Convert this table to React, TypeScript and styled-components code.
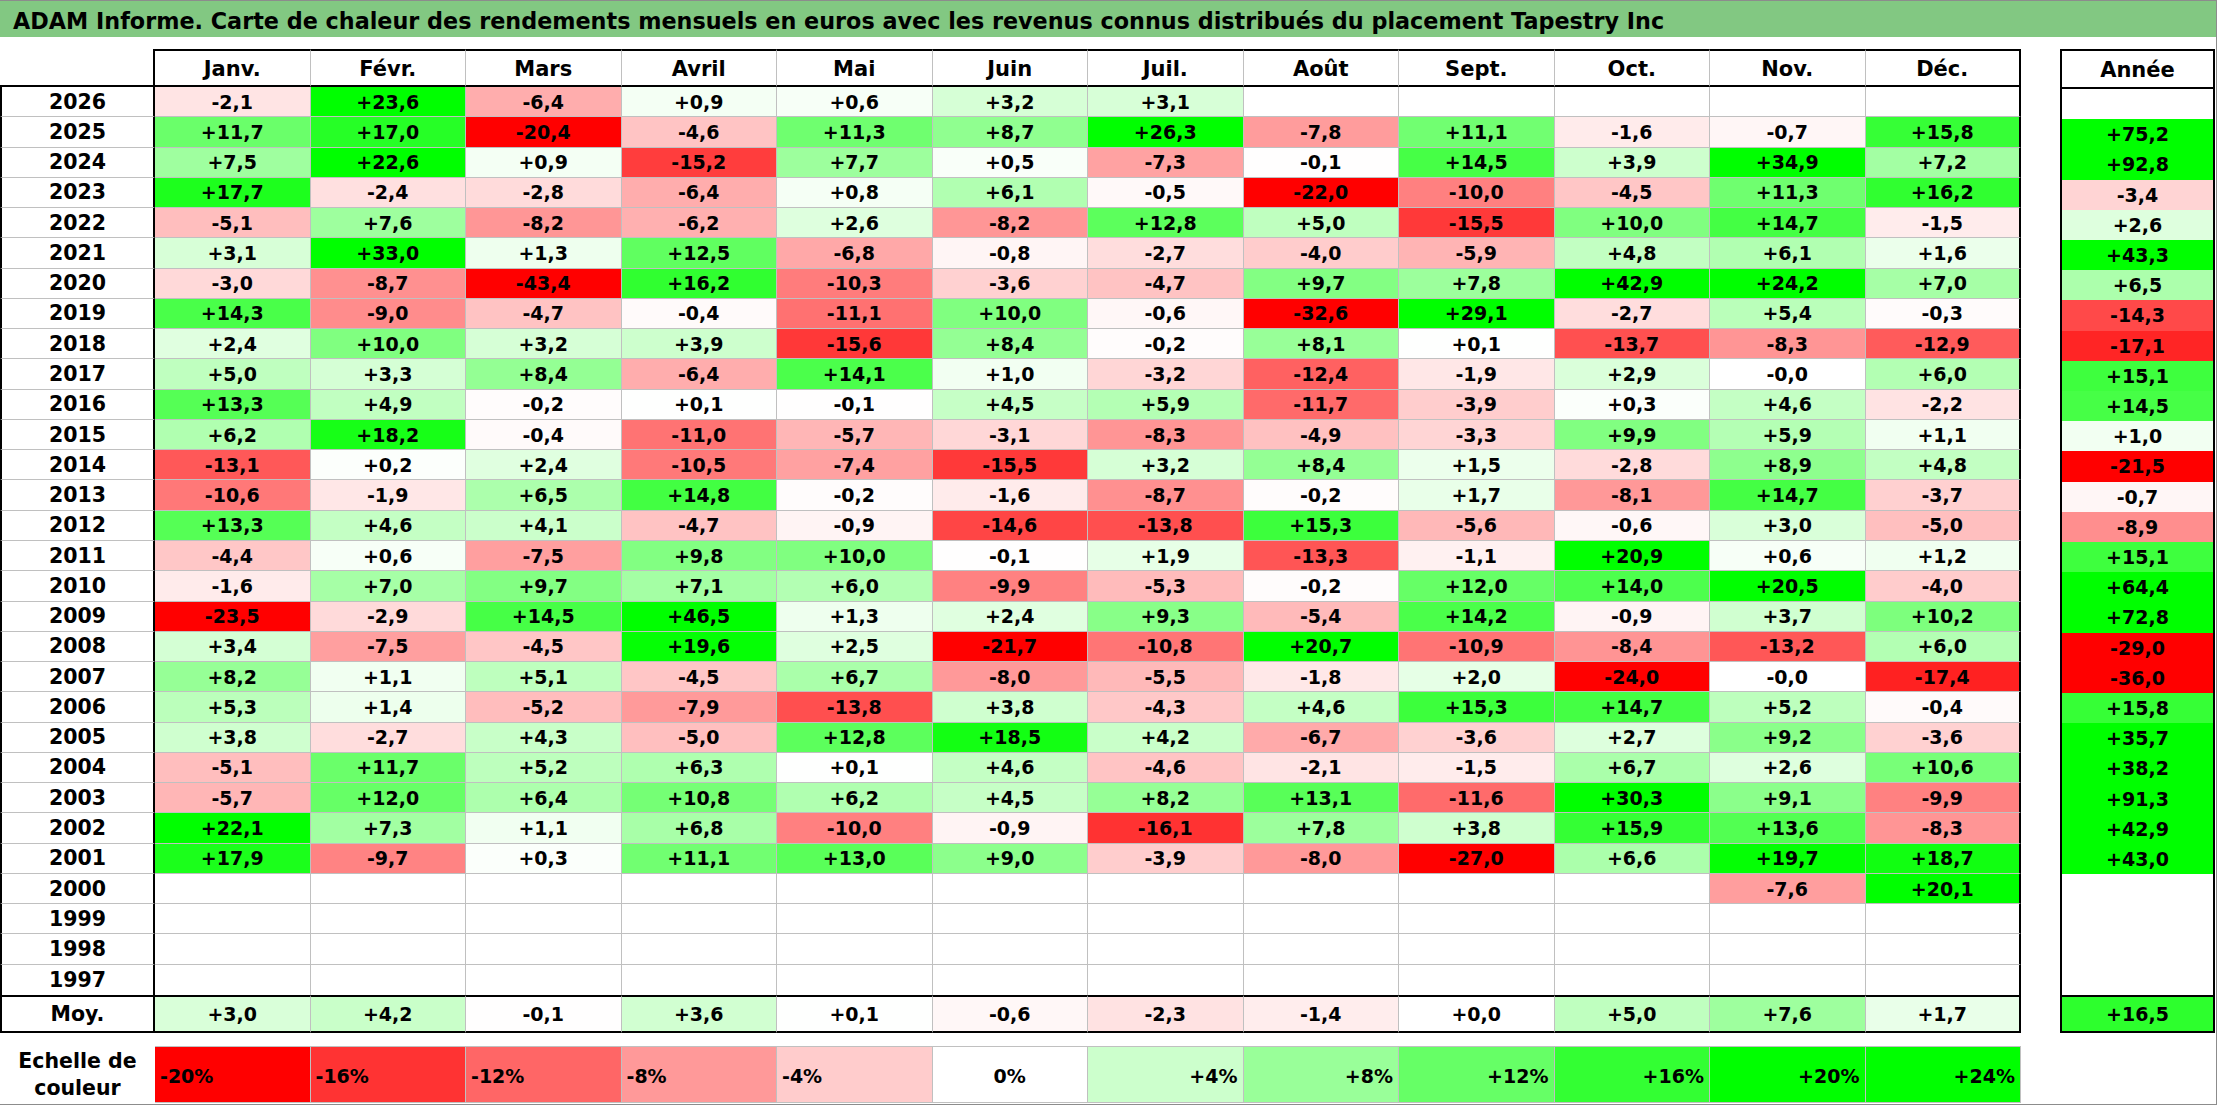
import React from "react";
import styled, { createGlobalStyle } from "styled-components";

const GlobalStyle = createGlobalStyle`
  html, body { margin: 0; padding: 0; background: #ffffff; }
  body { font-family: "DejaVu Sans", "Liberation Sans", sans-serif; color: #000; }
`;

const MONTHS = ["Janv.", "Févr.", "Mars", "Avril", "Mai", "Juin", "Juil.", "Août", "Sept.", "Oct.", "Nov.", "Déc."];

const RAW = `2026 -2,1 +23,6 -6,4 +0,9 +0,6 +3,2 +3,1 _ _ _ _ _ _
2025 +11,7 +17,0 -20,4 -4,6 +11,3 +8,7 +26,3 -7,8 +11,1 -1,6 -0,7 +15,8 +75,2
2024 +7,5 +22,6 +0,9 -15,2 +7,7 +0,5 -7,3 -0,1 +14,5 +3,9 +34,9 +7,2 +92,8
2023 +17,7 -2,4 -2,8 -6,4 +0,8 +6,1 -0,5 -22,0 -10,0 -4,5 +11,3 +16,2 -3,4
2022 -5,1 +7,6 -8,2 -6,2 +2,6 -8,2 +12,8 +5,0 -15,5 +10,0 +14,7 -1,5 +2,6
2021 +3,1 +33,0 +1,3 +12,5 -6,8 -0,8 -2,7 -4,0 -5,9 +4,8 +6,1 +1,6 +43,3
2020 -3,0 -8,7 -43,4 +16,2 -10,3 -3,6 -4,7 +9,7 +7,8 +42,9 +24,2 +7,0 +6,5
2019 +14,3 -9,0 -4,7 -0,4 -11,1 +10,0 -0,6 -32,6 +29,1 -2,7 +5,4 -0,3 -14,3
2018 +2,4 +10,0 +3,2 +3,9 -15,6 +8,4 -0,2 +8,1 +0,1 -13,7 -8,3 -12,9 -17,1
2017 +5,0 +3,3 +8,4 -6,4 +14,1 +1,0 -3,2 -12,4 -1,9 +2,9 -0,0 +6,0 +15,1
2016 +13,3 +4,9 -0,2 +0,1 -0,1 +4,5 +5,9 -11,7 -3,9 +0,3 +4,6 -2,2 +14,5
2015 +6,2 +18,2 -0,4 -11,0 -5,7 -3,1 -8,3 -4,9 -3,3 +9,9 +5,9 +1,1 +1,0
2014 -13,1 +0,2 +2,4 -10,5 -7,4 -15,5 +3,2 +8,4 +1,5 -2,8 +8,9 +4,8 -21,5
2013 -10,6 -1,9 +6,5 +14,8 -0,2 -1,6 -8,7 -0,2 +1,7 -8,1 +14,7 -3,7 -0,7
2012 +13,3 +4,6 +4,1 -4,7 -0,9 -14,6 -13,8 +15,3 -5,6 -0,6 +3,0 -5,0 -8,9
2011 -4,4 +0,6 -7,5 +9,8 +10,0 -0,1 +1,9 -13,3 -1,1 +20,9 +0,6 +1,2 +15,1
2010 -1,6 +7,0 +9,7 +7,1 +6,0 -9,9 -5,3 -0,2 +12,0 +14,0 +20,5 -4,0 +64,4
2009 -23,5 -2,9 +14,5 +46,5 +1,3 +2,4 +9,3 -5,4 +14,2 -0,9 +3,7 +10,2 +72,8
2008 +3,4 -7,5 -4,5 +19,6 +2,5 -21,7 -10,8 +20,7 -10,9 -8,4 -13,2 +6,0 -29,0
2007 +8,2 +1,1 +5,1 -4,5 +6,7 -8,0 -5,5 -1,8 +2,0 -24,0 -0,0 -17,4 -36,0
2006 +5,3 +1,4 -5,2 -7,9 -13,8 +3,8 -4,3 +4,6 +15,3 +14,7 +5,2 -0,4 +15,8
2005 +3,8 -2,7 +4,3 -5,0 +12,8 +18,5 +4,2 -6,7 -3,6 +2,7 +9,2 -3,6 +35,7
2004 -5,1 +11,7 +5,2 +6,3 +0,1 +4,6 -4,6 -2,1 -1,5 +6,7 +2,6 +10,6 +38,2
2003 -5,7 +12,0 +6,4 +10,8 +6,2 +4,5 +8,2 +13,1 -11,6 +30,3 +9,1 -9,9 +91,3
2002 +22,1 +7,3 +1,1 +6,8 -10,0 -0,9 -16,1 +7,8 +3,8 +15,9 +13,6 -8,3 +42,9
2001 +17,9 -9,7 +0,3 +11,1 +13,0 +9,0 -3,9 -8,0 -27,0 +6,6 +19,7 +18,7 +43,0
2000 _ _ _ _ _ _ _ _ _ _ -7,6 +20,1 _
1999 _ _ _ _ _ _ _ _ _ _ _ _ _
1998 _ _ _ _ _ _ _ _ _ _ _ _ _
1997 _ _ _ _ _ _ _ _ _ _ _ _ _`;

const AVG = "+3,0 +4,2 -0,1 +3,6 +0,1 -0,6 -2,3 -1,4 +0,0 +5,0 +7,6 +1,7 +16,5".split(" ");

type Row = { year: string; vals: (string | null)[] };

const ROWS: Row[] = RAW.split("\n").map((line) => {
  const parts = line.trim().split(/\s+/);
  return { year: parts[0], vals: parts.slice(1).map((p) => (p === "_" ? null : p)) };
});

const SCALE = [-20, -16, -12, -8, -4, 0, 4, 8, 12, 16, 20, 24];

function heat(v: string | number | null): string {
  if (v === null) return "#ffffff";
  const n = typeof v === "number" ? v : parseFloat(v.replace(",", "."));
  const t = Math.min(Math.abs(n) / 20, 1);
  const c = Math.round(255 * (1 - t));
  return n < 0 ? `rgb(255,${c},${c})` : `rgb(${c},255,${c})`;
}

const GRID = "#c0c0c0";
const BLACK = "#000000";

const Sheet = styled.div`
  width: 2217px;
  height: 1105px;
  box-sizing: border-box;
  border: 1px solid #8c8c8c;
  border-left: none;
  display: flex;
  flex-direction: column;
  overflow: hidden;
`;

const TitleBar = styled.div`
  height: 36px;
  flex: 0 0 36px;
  background: #82c882;
  display: flex;
  align-items: center;
  padding: 3px 0 0 13px;
  box-sizing: border-box;
  font-weight: bold;
  font-size: 22.3px;
  white-space: nowrap;
`;

const Tables = styled.div`
  display: flex;
  align-items: flex-start;
  gap: 39px;
  margin-top: 12px;
`;

const MonthGrid = styled.div`
  display: grid;
  grid-template-columns: 155px repeat(12, 1fr);
  grid-template-rows: 38px repeat(30, 1fr) 38px;
  width: 2021px;
  height: 984px;
`;

const CellBase = styled.div`
  box-sizing: border-box;
  display: flex;
  align-items: center;
  justify-content: center;
  font-weight: bold;
  white-space: nowrap;
`;

const Corner = styled(CellBase)`
  border-right: 2px solid ${BLACK};
  border-bottom: 2px solid ${BLACK};
`;

const MonthHead = styled(CellBase)<{ $last?: boolean }>`
  font-size: 21px;
  padding-top: 2px;
  border-top: 2px solid ${BLACK};
  border-bottom: 2px solid ${BLACK};
  border-right: ${(p) => (p.$last ? `2px solid ${BLACK}` : `1px solid ${GRID}`)};
`;

const YearLabel = styled(CellBase)<{ $lastRow?: boolean }>`
  font-size: 20.5px;
  border-left: 2px solid ${BLACK};
  border-right: 2px solid ${BLACK};
  border-bottom: ${(p) => (p.$lastRow ? "none" : `1px solid ${GRID}`)};
`;

const ValueCell = styled(CellBase).attrs<{ $bg: string }>((p) => ({
  style: { background: p.$bg },
}))<{ $bg: string; $last?: boolean; $lastRow?: boolean }>`
  font-size: 19px;
  border-right: ${(p) => (p.$last ? `2px solid ${BLACK}` : `1px solid ${GRID}`)};
  border-bottom: ${(p) => (p.$lastRow ? "none" : `1px solid ${GRID}`)};
`;

const AvgLabel = styled(CellBase)`
  font-size: 20.5px;
  border: 2px solid ${BLACK};
`;

const AvgCell = styled(CellBase).attrs<{ $bg: string }>((p) => ({
  style: { background: p.$bg },
}))<{ $bg: string; $last?: boolean }>`
  font-size: 19px;
  border-top: 2px solid ${BLACK};
  border-bottom: 2px solid ${BLACK};
  border-right: ${(p) => (p.$last ? `2px solid ${BLACK}` : `1px solid ${GRID}`)};
`;

const YearBox = styled.div`
  display: grid;
  grid-template-rows: 38px repeat(30, 1fr) 38px;
  width: 155px;
  height: 984px;
  box-sizing: border-box;
  border-top: 2px solid ${BLACK};
  border-left: 2px solid ${BLACK};
  border-right: 2px solid ${BLACK};
`;

const YearHead = styled(CellBase)`
  font-size: 21px;
  padding-top: 2px;
  border-bottom: 2px solid ${BLACK};
`;

const YearValue = styled(CellBase).attrs<{ $bg: string }>((p) => ({
  style: { background: p.$bg },
}))<{ $bg: string }>`
  font-size: 19px;
`;

const YearAvg = styled(CellBase).attrs<{ $bg: string }>((p) => ({
  style: { background: p.$bg },
}))<{ $bg: string }>`
  font-size: 19px;
  border-top: 2px solid ${BLACK};
  border-bottom: 2px solid ${BLACK};
`;

const ScaleRow = styled.div`
  display: grid;
  grid-template-columns: 155px repeat(12, 1fr);
  width: 2021px;
  height: 57px;
  margin-top: 13px;
`;

const ScaleLabel = styled(CellBase)`
  font-size: 20.5px;
  line-height: 27px;
  text-align: center;
  white-space: normal;
`;

const ScaleCell = styled(CellBase).attrs<{ $bg: string }>((p) => ({
  style: { background: p.$bg },
}))<{ $bg: string; $align: "left" | "center" | "right" }>`
  font-size: 19px;
  padding: 2px 5px 0 5px;
  border-top: 1px solid ${GRID};
  border-bottom: 1px solid ${GRID};
  border-right: 1px solid ${GRID};
  justify-content: ${(p) =>
    p.$align === "left" ? "flex-start" : p.$align === "right" ? "flex-end" : "center"};
`;

export default function App() {
  const lastRow = ROWS.length - 1;
  return (
    <>
      <GlobalStyle />
      <Sheet>
        <TitleBar>
          ADAM Informe. Carte de chaleur des rendements mensuels en euros avec les revenus connus distribués du placement Tapestry Inc
        </TitleBar>
        <Tables>
          <MonthGrid>
            <Corner />
            {MONTHS.map((m, i) => (
              <MonthHead key={m} $last={i === 11}>
                {m}
              </MonthHead>
            ))}
            {ROWS.map((r, ri) => (
              <React.Fragment key={r.year}>
                <YearLabel $lastRow={ri === lastRow}>{r.year}</YearLabel>
                {r.vals.slice(0, 12).map((v, ci) => (
                  <ValueCell key={ci} $bg={heat(v)} $last={ci === 11} $lastRow={ri === lastRow}>
                    {v ?? ""}
                  </ValueCell>
                ))}
              </React.Fragment>
            ))}
            <AvgLabel>Moy.</AvgLabel>
            {AVG.slice(0, 12).map((v, ci) => (
              <AvgCell key={ci} $bg={heat(v)} $last={ci === 11}>
                {v}
              </AvgCell>
            ))}
          </MonthGrid>
          <YearBox>
            <YearHead>Année</YearHead>
            {ROWS.map((r) => (
              <YearValue key={r.year} $bg={heat(r.vals[12])}>
                {r.vals[12] ?? ""}
              </YearValue>
            ))}
            <YearAvg $bg={heat(AVG[12])}>{AVG[12]}</YearAvg>
          </YearBox>
        </Tables>
        <ScaleRow>
          <ScaleLabel>
            Echelle de
            <br />
            couleur
          </ScaleLabel>
          {SCALE.map((s) => (
            <ScaleCell
              key={s}
              $bg={heat(s)}
              $align={s < 0 ? "left" : s === 0 ? "center" : "right"}
            >
              {s > 0 ? `+${s}%` : `${s}%`}
            </ScaleCell>
          ))}
        </ScaleRow>
      </Sheet>
    </>
  );
}
